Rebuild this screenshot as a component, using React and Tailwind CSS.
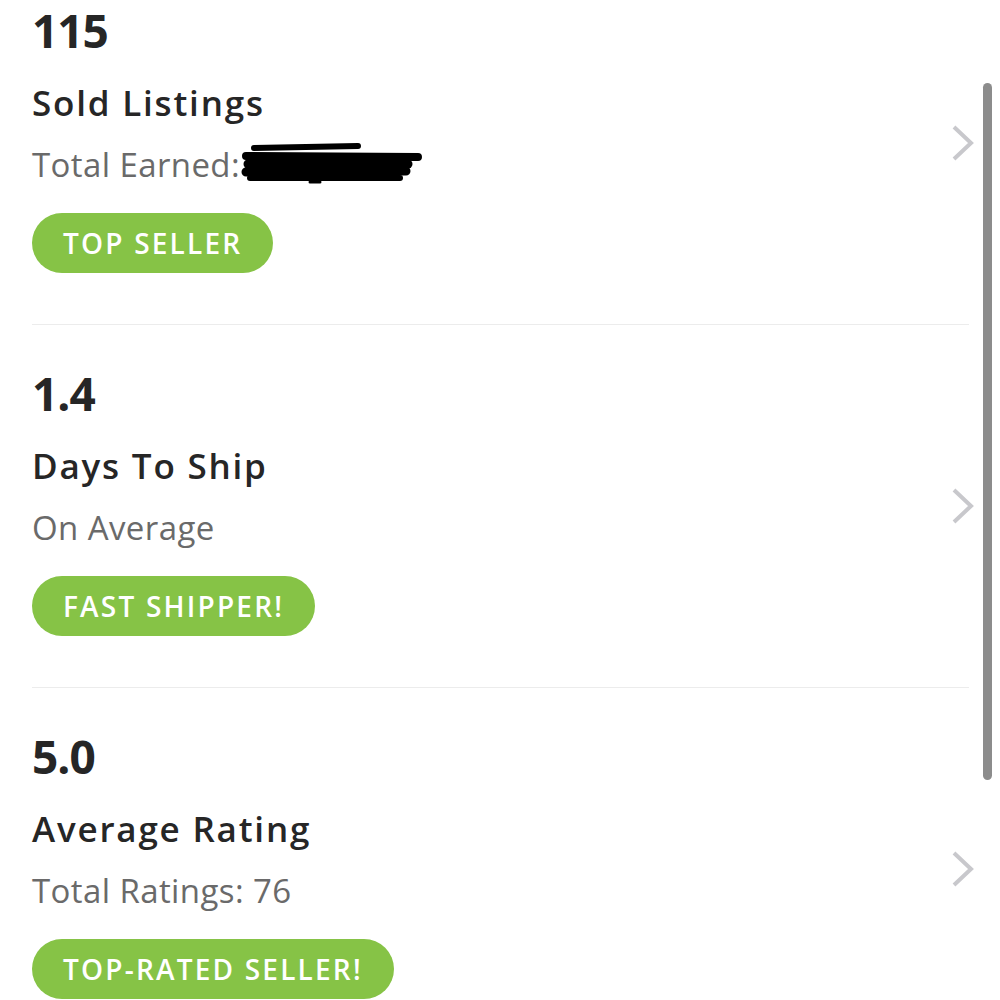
import React from "react";

const sections = [
  { num: "115", title: "Sold Listings", sub: "Total Earned:", badge: "TOP SELLER", redact: true },
  { num: "1.4", title: "Days To Ship", sub: "On Average", badge: "FAST SHIPPER!" },
  { num: "5.0", title: "Average Rating", sub: "Total Ratings: 76", badge: "TOP-RATED SELLER!" },
];

function Chevron() {
  return (
    <svg width="26" height="40" viewBox="0 0 26 40" className="shrink-0">
      <path d="M4 4 L21 20 L4 36" fill="none" stroke="#c8c8cc" strokeWidth="4" strokeLinecap="butt" strokeLinejoin="miter" />
    </svg>
  );
}

function Redaction() {
  return (
    <svg width="185" height="46" viewBox="0 0 185 46" className="ml-[0px] -mt-[4px]">
      <g stroke="#000" strokeLinecap="round" fill="none">
        <path d="M14 8 L118 6" strokeWidth="6" />
        <path d="M6 16 L178 17" strokeWidth="8" />
        <path d="M8 24 L168 24" strokeWidth="9" />
        <path d="M6 32 L166 31" strokeWidth="9" />
        <path d="M10 38 L160 38" strokeWidth="6" />
        <path d="M70 42 L80 42" strokeWidth="3" />
      </g>
    </svg>
  );
}

export default function App() {
  return (
    <div className="relative w-[1000px] h-[1000px] overflow-hidden bg-white" style={{ fontFamily: "'Open Sans', 'Noto Sans', sans-serif" }}>
      <div className="-mt-[38px]">
        {sections.map((s, i) => (
          <div key={i}>
            {i > 0 && <div className="ml-[32px] mr-[31px] h-[1px] bg-[#ececec]" />}
            <div className="flex items-center pl-[32px] pr-[24px]">
              <div className="flex-1 flex flex-col items-start pt-[40px] pb-[51px]">
                <div className="text-[46px] leading-[56px] font-bold tracking-[-1px] text-[#262626]">{s.num}</div>
                <div className="mt-[24px] text-[35px] leading-[42px] font-semibold tracking-[1.8px] text-[#262626]">{s.title}</div>
                <div className="mt-[20px] flex items-center text-[33px] leading-[42px] tracking-[0.4px] text-[#6a6a6a]">
                  <span>{s.sub}</span>
                  {s.redact && <Redaction />}
                </div>
                <div className="mt-[27px] h-[60px] px-[31px] rounded-full bg-[#86c346] flex items-center text-white text-[28px] font-semibold tracking-[2.2px]">
                  {s.badge}
                </div>
              </div>
              <Chevron />
            </div>
          </div>
        ))}
      </div>
      <div className="absolute left-[983px] top-[83px] w-[9px] h-[697px] rounded-full bg-[#8c8c8c]" />
    </div>
  );
}
